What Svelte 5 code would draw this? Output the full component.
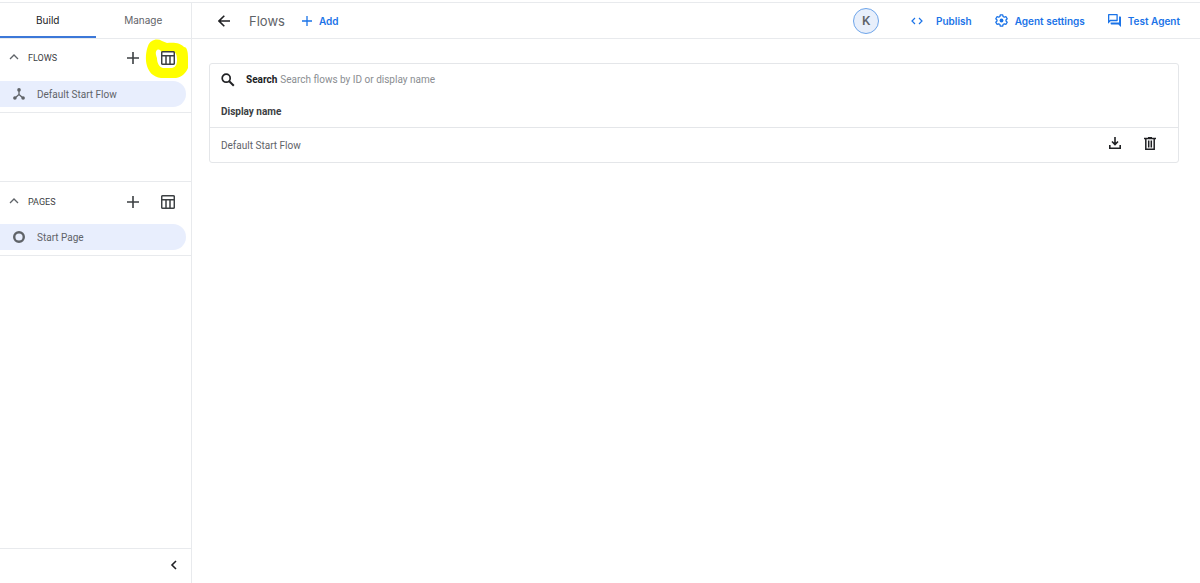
<script>
  let tab = 'build';
  let search = '';
  let flows = ['Default Start Flow'];
  let pages = ['Start Page'];

  let flowsOpen = true;
  let pagesOpen = true;

  $: shownFlows = flows.filter((flow) => flow.toLowerCase().includes(search.toLowerCase()));

  let addFlow = () => {
    flows = [...flows, 'New Flow'];
  }

  let addPage = () => {
    pages = [...pages, 'New Page'];
  }

  let deleteFlow = (name) => {
    flows = flows.filter((flow) => flow !== name);
  }
</script>

<div class="app">
  <aside class="sidebar">
    <div class="tabs">
      <button class="tab" class:active={tab === 'build'} on:click={() => {tab = 'build'}}>Build</button>
      <button class="tab" class:active={tab === 'manage'} on:click={() => {tab = 'manage'}}>Manage</button>
    </div>

    <section class="group flows">
      <div class="group-head">
        <button class="toggle" on:click={() => {flowsOpen = !flowsOpen}}>
          <svg width="10" height="10" viewBox="0 0 10 10"><path d="M1 6l4-4 4 4" fill="none" stroke="#5f6368" stroke-width="1.3" /></svg>
          <span>FLOWS</span>
        </button>
        <button class="icon-button" aria-label="Add flow" on:click={addFlow}>
          <svg width="12" height="12" viewBox="0 0 12 12"><path d="M6 0v12M0 6h12" stroke="#3c4043" stroke-width="1.6" /></svg>
        </button>
        <button class="icon-button marked" aria-label="Flow table">
          <!-- marker ring round the button -->
          <svg class="marker" width="44" height="42" viewBox="0 0 44 42">
            <path fill="#ffff00" fill-rule="evenodd" d="M3 8C5 2 12 0 17 3l5 2c7-1 14 0 17 4 3 0 4 5 4 10v11c-2 5-6 9-12 10H16C8 39 4 34 2 28 0 21 1 13 3 8zM12 12c-2 2-1 5 0 8 0 5 2 9 6 10h9c4-1 5-4 5-8 0-5-1-8-4-8H16c0-2-2-3-4-2z" />
          </svg>
          <svg class="table-icon" width="14" height="14" viewBox="0 0 14 14"><path d="M1.7.8h10.6q1 0 1 1v10.4q0 1-1 1H1.7q-1 0-1-1V1.8q0-1 1-1zM.8 4.8h12.4M5 4.8v8.4M9 4.8v8.4" fill="none" stroke="#3c4043" stroke-width="1.5" /></svg>
        </button>
      </div>
      {#if flowsOpen}
        {#each flows as flow}
          <a class="item" href="#flow">
            <svg width="12" height="12" viewBox="0 0 12 12">
              <path d="M6 2v4.5L2 10M6 6.5l4 3.5" fill="none" stroke="#5f6368" stroke-width="1.3" />
              <g fill="#5f6368"><circle cx="6" cy="1.9" r="1.8" /><circle cx="1.9" cy="10" r="1.8" /><circle cx="10.1" cy="10" r="1.8" /></g>
            </svg>
            <span>{flow}</span>
          </a>
        {/each}
      {/if}
    </section>

    <section class="group pages">
      <div class="group-head">
        <button class="toggle" on:click={() => {pagesOpen = !pagesOpen}}>
          <svg width="10" height="10" viewBox="0 0 10 10"><path d="M1 6l4-4 4 4" fill="none" stroke="#5f6368" stroke-width="1.3" /></svg>
          <span>PAGES</span>
        </button>
        <button class="icon-button" aria-label="Add page" on:click={addPage}>
          <svg width="12" height="12" viewBox="0 0 12 12"><path d="M6 0v12M0 6h12" stroke="#3c4043" stroke-width="1.6" /></svg>
        </button>
        <button class="icon-button" aria-label="Page table">
          <svg width="14" height="14" viewBox="0 0 14 14"><path d="M1.7.8h10.6q1 0 1 1v10.4q0 1-1 1H1.7q-1 0-1-1V1.8q0-1 1-1zM.8 4.8h12.4M5 4.8v8.4M9 4.8v8.4" fill="none" stroke="#3c4043" stroke-width="1.5" /></svg>
        </button>
      </div>
      {#if pagesOpen}
        {#each pages as page}
          <a class="item" href="#page">
            <svg width="12" height="12" viewBox="0 0 12 12"><circle cx="6" cy="6" r="4.800" fill="none" stroke="#5f6368" stroke-width="2.400" /></svg>
            <span>{page}</span>
          </a>
        {/each}
      {/if}
    </section>

    <div class="collapse">
      <button class="icon-button" aria-label="Collapse sidebar">
        <svg width="10" height="10" viewBox="0 0 10 10"><path d="M7 1L3 5l4 4" fill="none" stroke="#202124" stroke-width="1.6" /></svg>
      </button>
    </div>
  </aside>

  <div class="content">
    <header class="topbar">
      <button class="icon-button back" aria-label="Back">
        <svg width="12" height="12" viewBox="0 0 12 12"><path d="M12 6H1M6.3.7L1 6l5.3 5.3" fill="none" stroke="#202124" stroke-width="1.6" /></svg>
      </button>
      <h1>Flows</h1>
      <button class="action add" on:click={addFlow}>
        <svg width="10" height="10" viewBox="0 0 10 10"><path d="M5 0v10M0 5h10" stroke="#1a73e8" stroke-width="1.3" /></svg>
        <span>Add</span>
      </button>

      <div class="actions">
        <button class="avatar">K</button>
        <button class="action publish">
          <svg width="12" height="12" viewBox="0 0 12 12"><path d="M4 3L1 6l3 3M8 3l3 3-3 3" fill="none" stroke="#1a73e8" stroke-width="1.2" /></svg>
          <span>Publish</span>
        </button>
        <button class="action settings">
          <svg width="13" height="13" viewBox="0 0 13 13">
            <path d="M5.300.8h2.400l.4 1.700 1.200.7 1.700-.5 1.200 2.100L11 6v1l1.200 1.200-1.200 2.100-1.700-.5-1.200.7-.4 1.700H5.300l-.4-1.700-1.200-.7-1.700.5L.8 8.200 2 7V6L.8 4.800 2 2.700l1.700.5 1.200-.7z" fill="none" stroke="#1a73e8" stroke-width="1.300" stroke-linejoin="round" />
            <circle cx="6.500" cy="6.500" r="1.900" fill="#1a73e8" />
          </svg>
          <span>Agent settings</span>
        </button>
        <button class="action">
          <svg width="13" height="13" viewBox="2 2 20 20" fill="#1a73e8"><path d="M15 4v7H5.170L4 12.170V4h11m1-2H3c-.55 0-1 .45-1 1v14l4-4h10c.55 0 1-.45 1-1V3c0-.55-.45-1-1-1zm5 4h-2v9H6v2c0 .55.45 1 1 1h11l4 4V7c0-.55-.45-1-1-1z" /></svg>
          <span>Test Agent</span>
        </button>
      </div>
    </header>

    <main>
      <div class="card">
        <div class="search">
          <svg width="14" height="14" viewBox="0 0 14 14"><circle cx="5.200" cy="5.200" r="4" fill="none" stroke="#202124" stroke-width="1.700" /><path d="M8.200 8.200l4.600 4.600" stroke="#202124" stroke-width="2" /></svg>
          <label for="flow-search">Search</label>
          <input id="flow-search" type="text" placeholder="Search flows by ID or display name" bind:value={search} />
        </div>
        <table>
          <thead>
            <tr><th colspan="2">Display name</th></tr>
          </thead>
          <tbody>
            {#each shownFlows as flow}
              <tr>
                <td>{flow}</td>
                <td class="row-actions">
                  <div>
                    <button class="icon-button" aria-label="Export {flow}">
                      <svg width="12" height="12" viewBox="0 0 12 12"><path d="M6 0v7M3 4.500l3 3 3-3M.8 8v3.200h10.400V8" fill="none" stroke="#202124" stroke-width="1.600" /></svg>
                    </button>
                    <button class="icon-button" aria-label="Delete {flow}" on:click={() => deleteFlow(flow)}>
                      <svg width="12" height="13" viewBox="0 0 12 13"><path d="M0 1.500h12M4 .7h4M1.800 1.500v10.700h8.400V1.500M4.700 3.500v7M7.300 3.500v7" fill="none" stroke="#202124" stroke-width="1.500" /></svg>
                    </button>
                  </div>
                </td>
              </tr>
            {/each}
          </tbody>
        </table>
      </div>
    </main>
  </div>
</div>


<style>

  :global(body) {
    margin: 0;
    background: #fff;
  }

  .app {
    display: flex;
    min-height: 100vh;
    box-sizing: border-box;
    padding-top: 2px;
    font-family: Roboto, sans-serif;
    font-size: 10px;
    color: #3c4043;
  }

  button {
    padding: 0;
    border: none;
    background: none;
    font: inherit;
    color: inherit;
    cursor: pointer;
  }

  svg {
    display: block;
    flex: none;
  }

  .sidebar {
    display: flex;
    flex-direction: column;
    flex: none;
    width: 191px;
    border-top: 1px solid #e8eaed;
    border-right: 1px solid #e8eaed;
  }

  .tabs {
    display: flex;
    height: 35px;
    border-bottom: 1px solid #e8eaed;
  }

  .tab {
    flex: 1;
    height: 35px;
    box-sizing: border-box;
    border-bottom: 2px solid transparent;
    font-family: Inter, sans-serif;
    color: #5f6368;
  }

  .tab.active {
    border-color: #3c78d8;
    color: #202124;
  }

  .group {
    border-bottom: 1px solid #e8eaed;
    padding-bottom: 5px;
  }

  .pages {
    margin-top: 68px;
    border-top: 1px solid #e8eaed;
  }

  .group-head {
    display: flex;
    align-items: center;
    gap: 14px;
    height: 42px;
    box-sizing: border-box;
    padding: 0 13px 2px 9px;
  }

  .flows .group-head {
    padding-bottom: 4px;
  }

  .toggle {
    display: flex;
    align-items: center;
    gap: 9px;
    flex: 1;
    font-size: 9px;
  }

  .icon-button {
    display: flex;
    align-items: center;
    justify-content: center;
    width: 21px;
    height: 21px;
  }

  .marked {
    position: relative;
  }

  .marker {
    position: absolute;
    left: -12px;
    top: -10px;
  }

  .table-icon {
    position: relative;
  }

  .item {
    display: flex;
    align-items: center;
    gap: 12px;
    height: 26px;
    margin-right: 5px;
    padding-left: 13px;
    border-radius: 0 13px 13px 0;
    background: #e8eefd;
    color: #5f6368;
    text-decoration: none;
  }

  .collapse {
    display: flex;
    justify-content: flex-end;
    margin-top: auto;
    padding: 5px 7px 8px;
    border-top: 1px solid #e8eaed;
  }

  .content {
    flex: 1;
    min-width: 0;
  }

  .topbar {
    display: flex;
    align-items: center;
    height: 35px;
    padding: 0 20px 0 21px;
    border-top: 1px solid #e8eaed;
    border-bottom: 1px solid #e8eaed;
  }

  h1 {
    margin: 0 17px 0 15px;
    font-family: Inter, sans-serif;
    font-size: 13px;
    font-weight: 400;
    color: #5f6368;
  }

  .action {
    display: flex;
    align-items: center;
    gap: 7px;
    font-family: Inter, sans-serif;
    font-weight: 600;
    color: #1a73e8;
    white-space: nowrap;
  }

  .publish {
    gap: 13px;
    margin-left: 9px;
  }

  .actions {
    display: flex;
    align-items: center;
    gap: 23px;
    margin-left: auto;
  }

  .avatar {
    width: 26px;
    height: 26px;
    border: 1px solid #6ea5ea;
    border-radius: 50%;
    background: #e8effb;
    font-size: 13px;
    font-weight: 500;
    color: #5f6368;
  }

  main {
    padding: 24px 21px 24px 17px;
  }

  .card {
    border: 1px solid #e4e6e9;
    border-radius: 3px;
  }

  .search {
    display: flex;
    align-items: center;
    height: 31px;
    padding: 0 11px;
  }

  .search label {
    margin: 0 3px 0 11px;
    font-weight: 700;
    color: #202124;
  }

  .search input {
    flex: 1;
    padding: 0;
    border: none;
    outline: none;
    font: inherit;
    color: #3c4043;
  }

  .search input::placeholder {
    color: #8a8d91;
  }

  table {
    width: 100%;
    border-collapse: collapse;
  }

  th {
    height: 32px;
    padding: 0 11px;
    border-bottom: 1px solid #e4e6e9;
    text-align: left;
    font-weight: 700;
    color: #3c4043;
  }

  td {
    height: 34px;
    padding: 0 11px;
    color: #5f6368;
  }

  .row-actions div {
    display: flex;
    justify-content: flex-end;
    gap: 14px;
    padding: 0 7px 4px 0;
  }

</style>
